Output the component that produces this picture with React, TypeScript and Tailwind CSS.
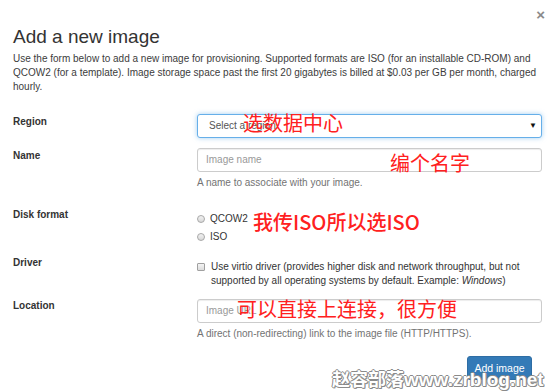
import React from "react";

const fontSans = "font-['Liberation_Sans',Arial,sans-serif]";
const fontCjk = "font-['Noto_Sans_CJK_SC','Noto_Sans',sans-serif]";

function Radio({ label }: { label: string }) {
  return (
    <div className="flex h-[14px] items-center">
      <span className="h-[8px] w-[8px] rounded-full border border-[#a8a8a8] bg-[linear-gradient(#f2f2f2,#d8d8d8)]" />
      <span className="ml-[5px] text-[#333]">{label}</span>
    </div>
  );
}

function Row({ label, children, className = "" }: { label: string; children: React.ReactNode; className?: string }) {
  return (
    <div className={`grid grid-cols-[184px_1fr] ${className}`}>
      <div className="pt-[1px] text-[10px] leading-[14px] font-bold text-[#333]">{label}</div>
      <div>{children}</div>
    </div>
  );
}

export default function App() {
  return (
    <div className={`relative h-[392px] w-[555px] overflow-hidden bg-white ${fontSans} text-[10px] leading-[14px] text-[#333]`}>
      <div className="px-[13px]">
        <div className="flex h-[22px] items-end justify-end">
          <span className="mr-[-3px] text-[15px] leading-[15px] font-bold text-[#8a8a8a]">×</span>
        </div>
        <h4 className="mt-[5px] text-[19px] leading-[20px] font-normal text-[#333]">Add a new image</h4>
        <p className="mt-[5px] text-[#3c3c3c]">
          Use the form below to add a new image for provisioning. Supported formats are ISO (for an installable CD-ROM) and
          QCOW2 (for a template). Image storage space past the first 20 gigabytes is billed at $0.03 per GB per month, charged
          hourly.
        </p>

        <div className="mt-[20px]">
          <Row label="Region">
            <div className="relative flex h-[24px] items-center rounded-[3px] border border-[#66afe9] bg-white pl-[11px] shadow-[0_0_5px_rgba(102,175,233,0.6)]">
              <span className="text-[#555]">Select a region</span>
              <span className="absolute right-[4px] top-[6px] text-[8px] leading-[10px] text-[#111]">▼</span>
            </div>
          </Row>

          <Row label="Name" className="mt-[10px]">
            <div className="flex h-[24px] items-center rounded-[3px] border border-[#ccc] bg-white pl-[8px] shadow-[inset_0_1px_1px_rgba(0,0,0,0.075)]">
              <span className="text-[#999]">Image name</span>
            </div>
            <div className="mt-[4px] text-[#737373]">A name to associate with your image.</div>
          </Row>

          <Row label="Disk format" className="mt-[17px]">
            <div className="pt-[5px]">
              <Radio label="QCOW2" />
              <div className="mt-[4px]">
                <Radio label="ISO" />
              </div>
            </div>
          </Row>

          <Row label="Driver" className="mt-[11px]">
            <div className="flex pt-[5px]">
              <span className="mt-[3px] h-[8px] w-[8px] shrink-0 rounded-[1px] border border-[#a0a0a0] bg-[linear-gradient(#f4f4f4,#dcdcdc)]" />
              <span className="ml-[6px] w-[320px]">
                Use virtio driver (provides higher disk and network throughput, but not supported by all operating systems by default. Example: <i>Windows</i>)
              </span>
            </div>
          </Row>

          <Row label="Location" className="mt-[10px]">
            <div className="mt-[1px] flex h-[24px] items-center rounded-[3px] border border-[#ccc] bg-white pl-[8px] shadow-[inset_0_1px_1px_rgba(0,0,0,0.075)]">
              <span className="text-[#999]">Image URL</span>
            </div>
            <div className="mt-[4px] text-[#737373]">A direct (non-redirecting) link to the image file (HTTP/HTTPS).</div>
          </Row>
        </div>

        <div className="mt-[15px] flex justify-end pr-[10px]">
          <button type="button" className="h-[24px] w-[65px] rounded-[3px] border border-[#2e6da4] bg-[#337ab7] text-[10.5px] text-white">
            Add image
          </button>
        </div>
      </div>

      {/* red annotations drawn over the form */}
      <span className={`absolute left-[243px] top-[111px] text-[20px] leading-[24px] text-[#ff2020] ${fontCjk}`}>选数据中心</span>
      <span className={`absolute left-[390px] top-[151px] text-[20px] leading-[24px] text-[#ff2020] ${fontCjk}`}>编个名字</span>
      <span className={`absolute left-[253px] top-[210px] text-[20px] leading-[24px] font-medium text-[#ff2020] ${fontCjk}`}>我传ISO所以选ISO</span>
      <span className={`absolute left-[237px] top-[297px] text-[20px] leading-[24px] text-[#ff2020] ${fontCjk}`}>可以直接上连接，很方便</span>

      {/* watermark */}
      <span
        className={`absolute left-[332px] top-[367px] text-[18px] leading-[22px] font-bold text-white ${fontCjk} [text-shadow:1px_0_#8a8a8a,-1px_0_#8a8a8a,0_1px_#8a8a8a,0_-1px_#8a8a8a,1px_1px_#8a8a8a]`}
      >
        赵容部落<span className={`${fontSans} text-[19px]`}>www.zrblog.net</span>
      </span>
    </div>
  );
}
